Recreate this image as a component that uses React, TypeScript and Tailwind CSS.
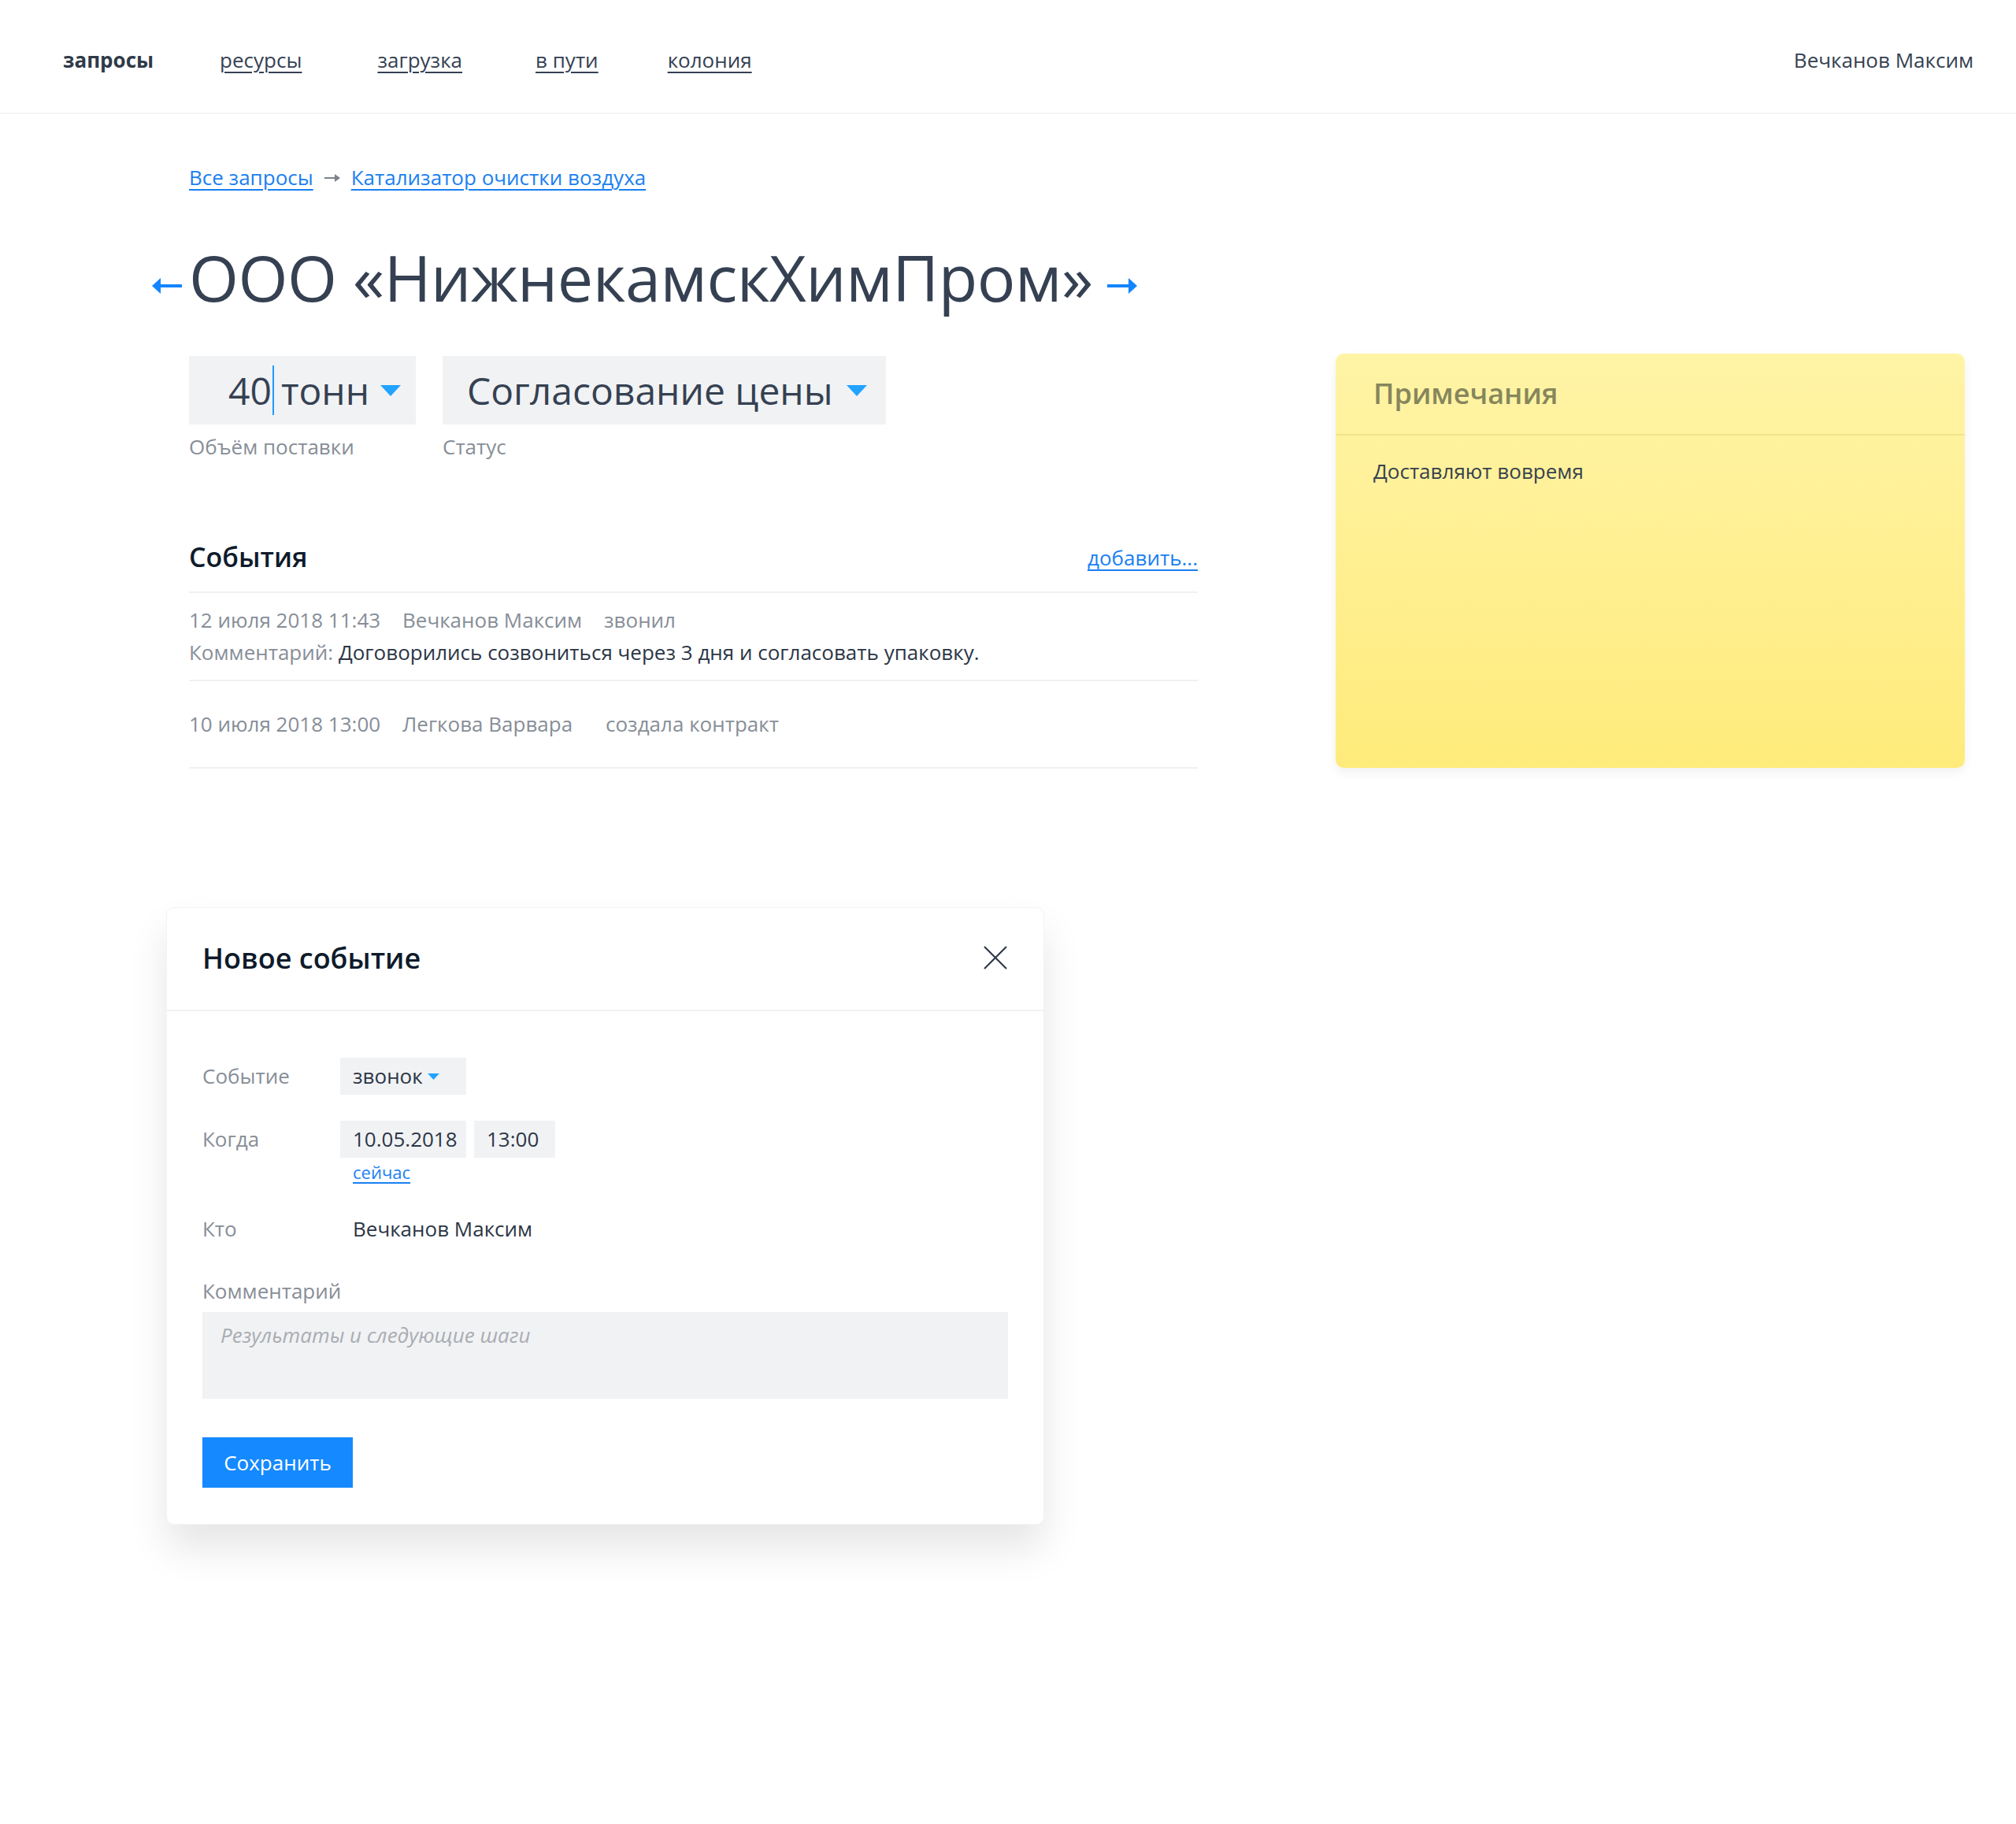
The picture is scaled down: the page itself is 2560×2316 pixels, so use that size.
import React from "react";

function Caret({ className = "" }: { className?: string }) {
  return (
    <svg viewBox="0 0 26 14" className={className}>
      <polygon points="0,0 26,0 13,14" fill="#22a3ff" />
    </svg>
  );
}

function TitleArrow({ dir }: { dir: "left" | "right" }) {
  return (
    <svg viewBox="0 0 38 20" className="w-[38px] h-[20px] mt-[22px] shrink-0">
      {dir === "left" ? (
        <g fill="#1485ff">
          <polygon points="0,10 11,0 11,20" />
          <rect x="10" y="8" width="28" height="4" />
        </g>
      ) : (
        <g fill="#1485ff">
          <polygon points="38,10 27,0 27,20" />
          <rect x="0" y="8" width="28" height="4" />
        </g>
      )}
    </svg>
  );
}

const navItems = ["ресурсы", "загрузка", "в пути", "колония"];

export default function App() {
  return (
    <div className="min-h-[2316px] w-full bg-white text-[#354152] font-['Open_Sans','Noto_Sans',sans-serif]">
      {/* Header */}
      <header className="h-[145px] border-b-2 border-[#f3f4f5] flex items-center justify-between pl-[80px] pr-[54px] pt-[10px]">
        <nav className="flex items-center text-[26px]">
          <span className="font-bold text-[#2f3a49] mr-[84px]">запросы</span>
          {navItems.map((item, i) => (
            <a
              key={item}
              href="#"
              className={
                "underline underline-offset-[5px] decoration-[2px] text-[#354152] " +
                (i === 0 ? "mr-[96px]" : i === 1 ? "mr-[93px]" : i === 2 ? "mr-[88px]" : "")
              }
            >
              {item}
            </a>
          ))}
        </nav>
        <div className="text-[26px] text-[#354152]">Вечканов Максим</div>
      </header>

      {/* Page */}
      <div className="pl-[240px]">
        <div className="pt-[60px] flex items-center gap-[14px] text-[26px] leading-[40px]">
          <a href="#" className="text-[#1a80f2] underline underline-offset-[5px] decoration-[2px]">
            Все запросы
          </a>
          <svg viewBox="0 0 20 10" className="w-[20px] h-[10px] mt-[2px]">
            <rect x="0" y="4" width="14" height="2" fill="#7c828b" />
            <polygon points="20,5 13,0 13,10" fill="#7c828b" />
          </svg>
          <a href="#" className="text-[#1a80f2] underline underline-offset-[5px] decoration-[2px]">
            Катализатор очистки воздуха
          </a>
        </div>

        <div className="flex items-center mt-[52px] -ml-[47px] h-[110px]">
          <TitleArrow dir="left" />
          <h1 className="ml-[9px] text-[81px] leading-[110px] font-normal text-[#354152] tracking-[-0.5px]">
            ООО «НижнекамскХимПром»
          </h1>
          <div className="ml-[18px]">
            <TitleArrow dir="right" />
          </div>
        </div>

        <div className="flex mt-[45px]">
          {/* Left column */}
          <div className="w-[1281px]">
            <div className="flex gap-[34px]">
              <div>
                <div className="w-[288px] h-[87px] bg-[#f1f2f4] flex items-center pl-[50px] pr-[19px]">
                  <span className="text-[48px] leading-none">40</span>
                  <span className="w-[2px] h-[63px] bg-[#1e9bff] mx-[1px]" />
                  <span className="text-[48px] leading-none ml-[8px]">тонн</span>
                  <Caret className="w-[26px] h-[14px] ml-auto" />
                </div>
                <div className="mt-[9px] text-[26px] text-[#878e97]">Объём поставки</div>
              </div>
              <div>
                <div className="h-[87px] bg-[#f1f2f4] flex items-center pl-[31px] pr-[23px]">
                  <span className="text-[48px] leading-none">Согласование цены</span>
                  <Caret className="w-[28px] h-[14px] ml-[16px]" />
                </div>
                <div className="mt-[9px] text-[26px] text-[#878e97]">Статус</div>
              </div>
            </div>

            {/* Events */}
            <div className="mt-[105px]">
              <div className="flex items-center justify-between h-[61px] border-b-2 border-[#f0f1f2]">
                <h2 className="text-[34px] font-semibold text-[#0f1b2b] leading-none -mt-[30px]">События</h2>
                <a href="#" className="text-[26px] text-[#1a80f2] underline underline-offset-[5px] decoration-[2px] -mt-[26px]">
                  добавить...
                </a>
              </div>
              <div className="h-[112px] border-b-2 border-[#f0f1f2] flex flex-col justify-center text-[26px] leading-[41px]">
                <div className="flex text-[#878e97]">
                  <span className="w-[271px]">12 июля 2018 11:43</span>
                  <span className="w-[256px]">Вечканов Максим</span>
                  <span>звонил</span>
                </div>
                <div>
                  <span className="text-[#878e97]">Комментарий: </span>
                  <span className="text-[#2c3646]">Договорились созвониться через 3 дня и согласовать упаковку.</span>
                </div>
              </div>
              <div className="h-[111px] border-b-2 border-[#f0f1f2] flex items-center text-[26px] text-[#878e97]">
                <span className="w-[271px]">10 июля 2018 13:00</span>
                <span className="w-[258px]">Легкова Варвара</span>
                <span>создала контракт</span>
              </div>
            </div>
          </div>

          {/* Notes */}
          <div className="ml-[175px] w-[799px] h-[526px] -mt-[3px] rounded-[10px] bg-gradient-to-b from-[#fff4a6] to-[#ffeb7b] shadow-[0_6px_14px_rgba(0,0,0,0.06)]">
            <div className="h-[104px] border-b-2 border-[#f2e48e] flex items-center px-[48px]">
              <span className="text-[36px] font-semibold text-[#86865c]">Примечания</span>
            </div>
            <div className="px-[48px] pt-[26px] text-[26px] text-[#38414f]">Доставляют вовремя</div>
          </div>
        </div>
      </div>

      {/* Modal: new event */}
      <div className="ml-[211px] mt-[176px] w-[1115px] h-[784px] rounded-[10px] bg-white border border-[#f3f3f3] shadow-[0_30px_50px_rgba(0,0,0,0.10)]">
        <div className="h-[131px] border-b-2 border-[#f1f2f3] flex items-center justify-between pl-[45px] pr-[46px]">
          <h3 className="text-[36px] font-semibold text-[#0f1b2b] -mt-[2px]">Новое событие</h3>
          <svg viewBox="0 0 30 30" className="w-[30px] h-[30px] -mt-[4px]">
            <path d="M1 1 L29 29 M29 1 L1 29" stroke="#2f3a4a" strokeWidth="2.2" fill="none" />
          </svg>
        </div>
        <div className="px-[45px] pt-[59px] text-[26px]">
          <div className="flex items-center h-[47px]">
            <span className="w-[175px] text-[#878e97]">Событие</span>
            <div className="h-[47px] w-[160px] bg-[#f1f2f4] flex items-center pl-[16px]">
              <span className="text-[#2c3646]">звонок</span>
              <Caret className="w-[15px] h-[8px] ml-[6px]" />
            </div>
          </div>
          <div className="flex items-center h-[47px] mt-[33px]">
            <span className="w-[175px] text-[#878e97]">Когда</span>
            <div className="h-[47px] w-[160px] bg-[#f1f2f4] flex items-center pl-[16px] text-[#2c3646]">10.05.2018</div>
            <div className="h-[47px] w-[103px] ml-[10px] bg-[#f1f2f4] flex items-center pl-[16px] text-[#2c3646]">13:00</div>
          </div>
          <div className="pl-[191px] mt-[2px] text-[22px] leading-[32px]">
            <a href="#" className="text-[#1a80f2] underline underline-offset-[4px] decoration-[2px]">сейчас</a>
          </div>
          <div className="flex items-center h-[40px] mt-[36px]">
            <span className="w-[175px] text-[#878e97]">Кто</span>
            <span className="pl-[16px] text-[#2c3646]">Вечканов Максим</span>
          </div>
          <div className="mt-[39px] text-[#878e97] leading-[40px]">Комментарий</div>
          <div className="mt-[7px] h-[110px] w-full bg-[#f1f2f4] px-[23px] pt-[10px]">
            <span className="italic text-[#a9adb3]">Результаты и следующие шаги</span>
          </div>
          <button className="mt-[49px] h-[64px] w-[191px] bg-[#1589ff] text-white text-[26px] flex items-center justify-center">
            Сохранить
          </button>
        </div>
      </div>
    </div>
  );
}
